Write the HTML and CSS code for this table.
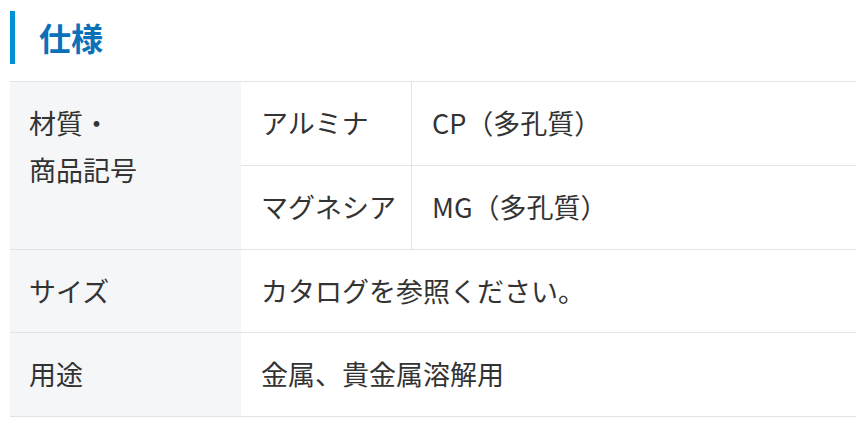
FILE: index.html
```html
<!DOCTYPE html>
<html lang="ja">
<head>
<meta charset="utf-8">
<title>仕様</title>
<link rel="stylesheet" href="styles.css">
</head>
<body>
<section class="spec">
  <h2 class="spec-title">仕様</h2>
  <table class="spec-table">
    <tr>
      <th rowspan="2">材質・<br>商品記号</th>
      <td class="sub">アルミナ</td>
      <td class="val">CP（多孔質）</td>
    </tr>
    <tr>
      <td class="sub">マグネシア</td>
      <td class="val">MG（多孔質）</td>
    </tr>
    <tr>
      <th>サイズ</th>
      <td colspan="2">カタログを参照ください。</td>
    </tr>
    <tr>
      <th>用途</th>
      <td colspan="2">金属、貴金属溶解用</td>
    </tr>
  </table>
</section>
</body>
</html>
```

FILE: styles.css
```css
html, body {
  margin: 0;
  padding: 0;
  background: #fff;
}
body {
  font-family: "Noto Sans CJK JP", "Noto Sans", sans-serif;
  color: #333;
}
.spec {
  padding: 11px 0 0 10px;
}
.spec-title {
  margin: 0 0 17px;
  height: 53px;
  line-height: 53px;
  border-left: 5px solid #0092d4;
  padding-left: 24px;
  font-size: 32px;
  font-weight: 700;
  color: #0a70b8;
}
.spec-table {
  width: 846px;
  border-collapse: collapse;
  font-size: 27px;
  line-height: 46.75px;
}
.spec-table th,
.spec-table td {
  border-top: 1px solid #e3e3e3;
  border-bottom: 1px solid #e3e3e3;
  padding: 18px 20px;
  text-align: left;
  vertical-align: middle;
  font-weight: 400;
}
.spec-table th {
  width: 192px;
  padding-left: 19px;
  background: #f5f6f8;
  vertical-align: top;
}
.spec-table td.sub {
  width: 135px;
  padding-right: 15px;
  border-right: 1px solid #e3e3e3;
}
```
